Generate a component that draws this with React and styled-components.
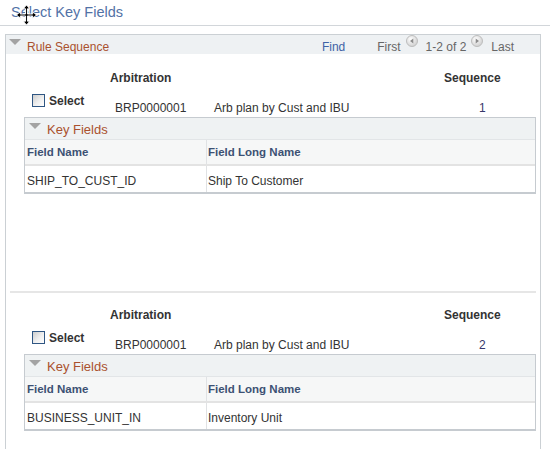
import React from "react";
import styled, { createGlobalStyle } from "styled-components";

const GlobalStyle = createGlobalStyle`
  html, body {
    margin: 0;
    padding: 0;
    background: #fff;
  }
  body {
    font-family: "Liberation Sans", Arial, sans-serif;
    font-size: 12px;
    color: #333;
  }
`;

const rules = [
  {
    seq: 1,
    arbId: "BRP0000001",
    descr: "Arb plan by Cust and IBU",
    fields: [{ name: "SHIP_TO_CUST_ID", longName: "Ship To Customer" }],
  },
  {
    seq: 2,
    arbId: "BRP0000001",
    descr: "Arb plan by Cust and IBU",
    fields: [{ name: "BUSINESS_UNIT_IN", longName: "Inventory Unit" }],
  },
];

function NavArrow({ dir }) {
  return (
    <NavIcon width="12" height="12" viewBox="0 0 12 12">
      <defs>
        <radialGradient id={"nav-" + dir} cx="40%" cy="35%" r="70%">
          <stop offset="0%" stopColor="#ffffff" />
          <stop offset="100%" stopColor="#cdcdcd" />
        </radialGradient>
      </defs>
      <circle cx="6" cy="6" r="5.5" fill={"url(#nav-" + dir + ")"} stroke="#bdbdbd" />
      {dir === "prev" ? (
        <polygon points="7.3,3.4 7.3,8.6 4,6" fill="#8c8c8c" />
      ) : (
        <polygon points="4.7,3.4 4.7,8.6 8,6" fill="#8c8c8c" />
      )}
    </NavIcon>
  );
}

function MoveCursor() {
  return (
    <Cursor width="21" height="22" viewBox="-0.5 -0.5 22 22">
      <path
        d="M10.5 0 L14 4 L11.5 4 L11.5 9.5 L17 9.5 L17 7 L21 10.5 L17 14 L17 11.5 L11.5 11.5 L11.5 17 L14 17 L10.5 21 L7 17 L9.5 17 L9.5 11.5 L4 11.5 L4 14 L0 10.5 L4 7 L4 9.5 L9.5 9.5 L9.5 4 L7 4 Z"
        fill="#000"
        stroke="#fff"
        strokeWidth="1"
      />
    </Cursor>
  );
}

function KeyFieldsGrid({ fields }) {
  return (
    <Grid>
      <GridHeader>
        <Collapse />
        <GridTitle>Key Fields</GridTitle>
      </GridHeader>
      <GridRow $head>
        <Cell $head>Field Name</Cell>
        <Cell $head>Field Long Name</Cell>
      </GridRow>
      {fields.map((f) => (
        <GridRow key={f.name}>
          <Cell>{f.name}</Cell>
          <Cell>{f.longName}</Cell>
        </GridRow>
      ))}
    </Grid>
  );
}

function RuleRow({ rule, top }) {
  return (
    <Row $top={top}>
      <LabelLine>
        <span />
        <Label>Arbitration</Label>
        <span />
        <Label>Sequence</Label>
      </LabelLine>
      <ValueLine>
        <SelectBox>
          <Check />
          <Label>Select</Label>
        </SelectBox>
        <Value $pad={5}>{rule.arbId}</Value>
        <Value>{rule.descr}</Value>
        <Value $pad={35} $seq>
          {rule.seq}
        </Value>
      </ValueLine>
      <KeyFieldsGrid fields={rule.fields} />
    </Row>
  );
}

export default function App() {
  return (
    <Page>
      <GlobalStyle />
      <TitleBar>Select Key Fields</TitleBar>
      <Panel>
        <PanelHeader>
          <Collapse $outer />
          <PanelTitle>Rule Sequence</PanelTitle>
          <Nav>
            <NavLink>Find</NavLink>
            <NavText>First</NavText>
            <NavArrow dir="prev" />
            <NavText>1-2 of 2</NavText>
            <NavArrow dir="next" />
            <NavText $last>Last</NavText>
          </Nav>
        </PanelHeader>
        {rules.map((r, i) => (
          <RuleRow key={r.seq} rule={r} top={i === 0 ? 17 : 15} />
        ))}
      </Panel>
      <MoveCursor />
    </Page>
  );
}

const Page = styled.div`
  position: relative;
  width: 550px;
  height: 449px;
  overflow: hidden;
`;

const TitleBar = styled.div`
  height: 25px;
  line-height: 24px;
  padding-left: 11px;
  border-bottom: 1px solid #d2d6da;
  font-size: 14.5px;
  color: #5272a6;
`;

const Panel = styled.div`
  margin: 8px 0 0 5px;
  width: 534px;
  border: 1px solid #cbd0d4;
  border-bottom: none;
`;

const PanelHeader = styled.div`
  display: flex;
  align-items: flex-start;
  height: 19px;
  background: #eef1f3;
`;

const Collapse = styled.span`
  flex: none;
  width: 0;
  height: 0;
  margin: ${(p) => (p.$outer ? "4px 0 0 3px" : "5px 0 0 4px")};
  border-left: 6px solid transparent;
  border-right: 6px solid transparent;
  border-top: 6px solid #a3a3a3;
`;

const PanelTitle = styled.span`
  margin-left: 6px;
  padding-top: 4px;
  line-height: 16px;
  font-size: 12px;
  color: #aa512e;
`;

const Nav = styled.div`
  display: flex;
  align-items: flex-start;
  margin-left: auto;
  margin-right: 26px;
`;

const NavLink = styled.span`
  padding-top: 4px;
  line-height: 16px;
  margin-right: 32px;
  color: #3f63a6;
`;

const NavText = styled.span`
  padding-top: 4px;
  line-height: 16px;
  color: #666;
  margin-right: ${(p) => (p.$last ? 0 : 5)}px;
`;

const NavIcon = styled.svg`
  display: block;
  flex: none;
  margin: 0 8px 0 0;
`;

const Row = styled.div`
  box-sizing: border-box;
  height: 239px;
  margin: 0 4px;
  padding-top: ${(p) => p.$top}px;
  border-bottom: 2px solid #e6e6e6;
`;

const columns = `
  display: grid;
  grid-template-columns: 100px 104px 230px 1fr;
`;

const LabelLine = styled.div`
  ${columns}
  line-height: 14px;
`;

const ValueLine = styled.div`
  ${columns}
  height: 32px;
`;

const Label = styled.span`
  font-weight: bold;
  color: #333;
  line-height: 14px;
`;

const SelectBox = styled.label`
  display: flex;
  align-items: center;
  gap: 4px;
  align-self: start;
  margin-top: 7px;
  padding-left: 22px;

  span {
    padding-top: 2px;
  }
`;

const Check = styled.span`
  box-sizing: border-box;
  width: 13px;
  height: 13px;
  border: 1px solid #2f5683;
  background: linear-gradient(135deg, #cdcdcd 0%, #efefef 55%, #fff 100%);
`;

const Value = styled.span`
  align-self: end;
  line-height: 14px;
  padding-bottom: 2px;
  padding-left: ${(p) => p.$pad || 0}px;
  color: ${(p) => (p.$seq ? "#37376a" : "#333")};
`;

const Grid = styled.div`
  margin-left: 14px;
  border: 1px solid #c6cbd0;
  border-bottom: 2px solid #c6cbd0;
`;

const GridHeader = styled.div`
  display: flex;
  align-items: flex-start;
  height: 21px;
  background: #eff2f3;
  border-bottom: 1px solid #e2e5e7;
`;

const GridTitle = styled.span`
  margin-left: 6px;
  padding-top: 4px;
  line-height: 16px;
  font-size: 13px;
  color: #aa512e;
`;

const GridRow = styled.div`
  display: grid;
  grid-template-columns: 182px 1fr;
  height: ${(p) => (p.$head ? 24 : 26)}px;
  background: ${(p) => (p.$head ? "#f6f7f7" : "#fff")};
  border-bottom: ${(p) => (p.$head ? "2px solid #e3e3e3" : "none")};
`;

const Cell = styled.div`
  padding: ${(p) => (p.$head ? "0 0 0 2px" : "4px 0 0 2px")};
  line-height: ${(p) => (p.$head ? 24 : 22)}px;
  font-size: ${(p) => (p.$head ? 11.5 : 12)}px;
  font-weight: ${(p) => (p.$head ? "bold" : "normal")};
  color: ${(p) => (p.$head ? "#3d5173" : "#333")};
  white-space: nowrap;

  &:first-child {
    border-right: 1px solid #e0e2e4;
  }
  &:last-child {
    padding-left: 1px;
  }
`;

const Cursor = styled.svg`
  position: absolute;
  left: 16px;
  top: 4px;
`;
